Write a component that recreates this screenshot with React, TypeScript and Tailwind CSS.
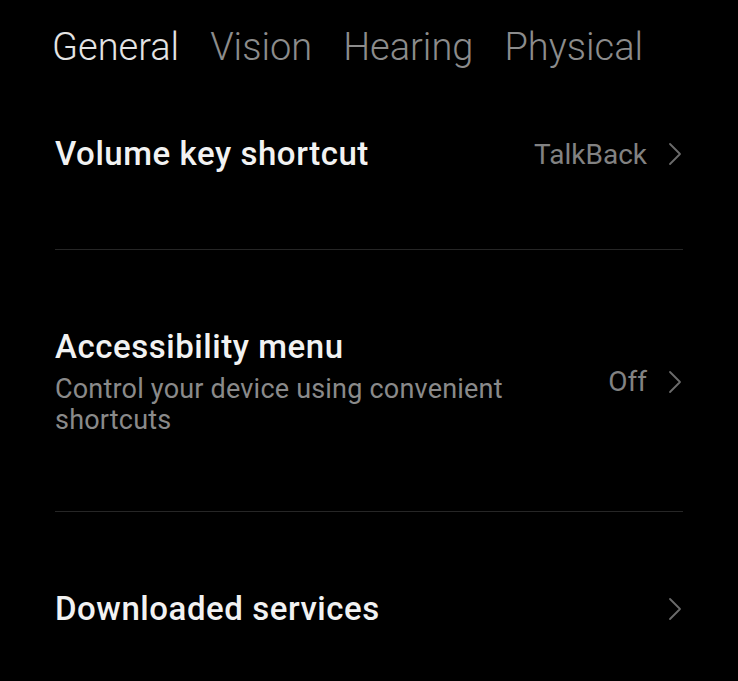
const tabs = ["General", "Vision", "Hearing", "Physical"];

function Chevron() {
    return (
        <svg width="14" height="24" viewBox="0 0 14 24" fill="none" className="shrink-0">
            <polyline points="2,2 12,12 2,22" stroke="#6b6b6b" strokeWidth="1.8" strokeLinecap="round" strokeLinejoin="round" />
        </svg>
    );
}

export default function App() {
    return (
        <div className="w-[738px] h-[681px] bg-black overflow-hidden font-['Roboto',sans-serif]">
            <div className="flex gap-[31px] pl-[52px] pt-[25px]">
                {tabs.map((t, i) => (
                    <span
                        key={t}
                        className={`text-[38px] leading-[44px] font-light ${i === 0 ? "text-[#e4e4e4]" : "text-[#8c8c8c]"}`}
                    >
                        {t}
                    </span>
                ))}
            </div>

            <div className="flex items-center pl-[55px] pr-[56px] pt-[63px] pb-[74px]">
                <div className="flex-1 text-[33px] leading-[40px] tracking-[0.55px] font-medium text-[#f2f2f2]">
                    Volume key shortcut
                </div>
                <div className="flex items-center gap-[21px]">
                    <span className="text-[28px] leading-[40px] pt-[3px] text-[#828282]">TalkBack</span>
                    <Chevron />
                </div>
            </div>
            <div className="mx-[55px] h-px bg-[#262626]" />

            <div className="flex items-center pl-[55px] pr-[56px] pt-[77px] pb-[75px]">
                <div className="flex-1 min-w-0">
                    <div className="text-[33px] leading-[40px] tracking-[0.55px] font-medium text-[#f2f2f2]">
                        Accessibility menu
                    </div>
                    <div className="mt-[7px] max-w-[480px] text-[27px] leading-[31px] tracking-[0.2px] text-[#8a8a8a]">
                        Control your device using convenient shortcuts
                    </div>
                </div>
                <div className="flex items-center gap-[21px] pl-[24px]">
                    <span className="text-[28px] leading-[40px] text-[#828282]">Off</span>
                    <Chevron />
                </div>
            </div>
            <div className="mx-[55px] h-px bg-[#262626]" />

            <div className="flex items-center pl-[55px] pr-[56px] pt-[77px]">
                <div className="flex-1 text-[33px] leading-[40px] tracking-[0.55px] font-medium text-[#f2f2f2]">
                    Downloaded services
                </div>
                <Chevron />
            </div>
        </div>
    );
}
